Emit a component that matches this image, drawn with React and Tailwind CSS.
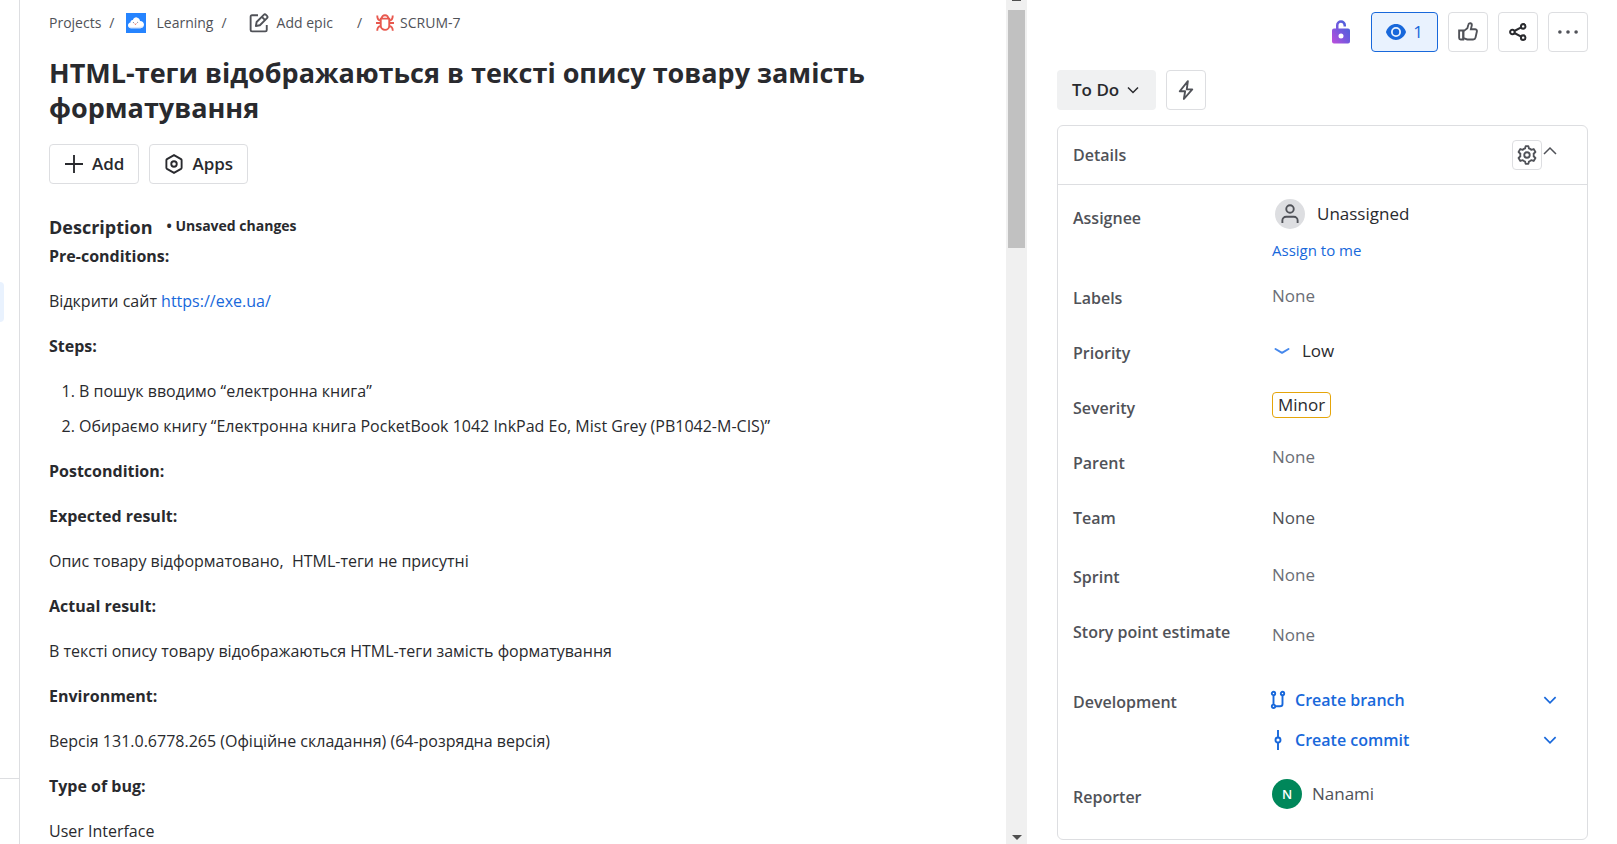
import React from "react";

const FONT = "font-['Open_Sans','Noto_Sans',sans-serif]";

function Svg({ size = 18, box = 16, className = "", children, ...rest }) {
  return (
    <svg
      width={size}
      height={size}
      viewBox={`0 0 ${box} ${box}`}
      fill="none"
      stroke="currentColor"
      strokeWidth="1.5"
      aria-hidden="true"
      className={`shrink-0 ${className}`}
      {...rest}
    >
      {children}
    </svg>
  );
}

const ChevronDown = ({ size = 18 }) => (
  <Svg size={size}>
    <path d="M3 5.500 8 10.500l5-5" />
  </Svg>
);
const ChevronUp = ({ size = 18 }) => (
  <Svg size={size}>
    <path d="M2 11 8 5l6 6" />
  </Svg>
);

const CloudLogo = () => (
  <svg width="20" height="20" viewBox="0 0 20 20" aria-hidden="true" className="shrink-0">
    <rect width="20" height="20" fill="#2684ff" />
    <path
      d="M5.200 15.200c-2 0-3.200-1.300-3.200-2.900 0-1.500 1.100-2.600 2.500-2.800C4.400 7.800 5.500 6.700 6.900 6.900 7.500 5.200 9 4.200 10.700 4.400c2 .2 3.200 1.700 3.300 3.500 2.300 0 4 1.500 4 3.700 0 2.100-1.600 3.600-3.700 3.600z"
      fill="#fff"
    />
    <path d="M2.300 13.400c.6 1.200 1.700 1.800 2.900 1.800h9.100c1.500 0 2.700-.7 3.300-1.900-3 .9-12 1-15.300.1z" fill="#dbe8fb" />
    <circle cx="7.400" cy="9.500" r=".5" fill="#5e6c84" />
    <circle cx="11.600" cy="9.200" r=".5" fill="#5e6c84" />
    <path d="M8.500 10.700c.5.900 1.500.8 1.900-.1" stroke="#e5493a" strokeWidth=".9" fill="none" />
  </svg>
);

const EditIcon = () => (
  <Svg size={20}>
    <path d="M7.200 1.800H2.400c-.7 0-1.100.5-1.100 1.100v10.700c0 .6.500 1.100 1.100 1.100h10.700c.7 0 1.100-.5 1.100-1.100V9.500" />
    <path d="M5.500 10.400l.6-3.200 5.700-5.700c.5-.5 1.300-.5 1.800 0l.8.800c.5.500.5 1.300 0 1.800L8.700 9.800z" strokeLinejoin="round" />
    <path d="M10.300 3.100l2.600 2.600" />
  </Svg>
);

const BugIcon = () => (
  <Svg size={20}>
    <path d="M4.600 4.500h6.800v5.600a3.400 3.400 0 0 1-6.800 0z" />
    <path d="M5.300 4.500a2.700 2.700 0 0 1 5.400 0" />
    <path d="M4.600 8H.8M15.200 8h-3.800M4.600 6C2.600 6 1.800 4.600 1.800 2M11.400 6c2 0 2.800-1.400 2.800-4M4.800 10.500c-2 0-3 1.200-3 3.700M11.200 10.500c2 0 3 1.200 3 3.700" />
  </Svg>
);

const AppsIcon = () => (
  <Svg size={20}>
    <path d="M8 .9l5.600 3.200c.3.200.5.500.5.900v6c0 .4-.2.700-.5.900L8 15.100l-5.600-3.200c-.3-.2-.5-.5-.5-.9V5c0-.4.2-.7.5-.9z" />
    <circle cx="8" cy="8" r="2.200" />
  </Svg>
);

const LockIcon = () => (
  <svg width="18" height="24" viewBox="0 0 18 24" aria-hidden="true" className="shrink-0">
    <defs>
      <linearGradient id="lock" x1="0" y1="1" x2="1" y2="0">
        <stop offset="0" stopColor="#bf4fdc" />
        <stop offset=".5" stopColor="#7358de" />
        <stop offset="1" stopColor="#3b63d8" />
      </linearGradient>
    </defs>
    <path
      fill="url(#lock)"
      fillRule="evenodd"
      d="M2 8.500h2V5.200a5 5 0 0 1 10 0V6.500h-2.500V5.200a2.500 2.500 0 0 0-5 0V8.500H16a2 2 0 0 1 2 2V21.500a2 2 0 0 1-2 2H2a2 2 0 0 1-2-2V10.500a2 2 0 0 1 2-2zm7 5a2.500 2.500 0 1 0 0 5 2.500 2.500 0 0 0 0-5z"
    />
  </svg>
);

const EyeIcon = () => (
  <svg width="20" height="16" viewBox="0 0 20 16" aria-hidden="true" className="shrink-0">
    <path
      fill="currentColor"
      fillRule="evenodd"
      d="M10 0c4.300 0 7.700 2.600 9.700 6.900.3.700.3 1.500 0 2.200C17.700 13.400 14.300 16 10 16S2.300 13.400.3 9.100a2.700 2.700 0 0 1 0-2.200C2.300 2.600 5.700 0 10 0zm0 3a5 5 0 1 0 0 10 5 5 0 0 0 0-10zm0 1.800a3.200 3.200 0 1 1 0 6.400 3.200 3.200 0 0 1 0-6.400z"
    />
  </svg>
);

const ThumbIcon = () => (
  <Svg size={20}>
    <path d="M.9 6.800h3.300v7.200H2.100c-.7 0-1.200-.5-1.200-1.200z" />
    <path d="M4.300 7.500 7.500 5l.8-2.900c.2-.8.900-1.300 1.700-1.100.8.200 1.200 1 1 1.800L10.300 5.800h3.300c1 0 1.700.9 1.500 1.800l-1.100 4.900c-.2.900-1 1.500-1.900 1.500H7.400L4.300 12.900z" />
  </Svg>
);

const ShareIcon = () => (
  <Svg size={18} strokeWidth="1.800">
    <circle cx="3" cy="8" r="2" />
    <circle cx="12.600" cy="3" r="2" />
    <circle cx="12.600" cy="13" r="2" />
    <path d="M4.800 7.100l6-3.200M4.800 8.900l6 3.200" />
  </Svg>
);

const MoreIcon = () => (
  <svg width="20" height="20" viewBox="0 0 20 20" fill="currentColor" aria-hidden="true">
    <circle cx="1.900" cy="10" r="1.800" />
    <circle cx="10" cy="10" r="1.800" />
    <circle cx="18.100" cy="10" r="1.800" />
  </svg>
);

const BoltIcon = () => (
  <Svg size={20}>
    <path d="M9.500.9 3 9h4.300l-1 6.200L13 7.500H8.600z" strokeLinejoin="round" />
  </Svg>
);

const GearIcon = () => (
  <Svg size={22} box={24} strokeWidth="2">
    <path d="M9.900 4.900l.6-2.600h3l.6 2.600a7.400 7.400 0 0 1 2.500 1.400l2.700-.8 1.900 3.200-2 1.900a7.400 7.400 0 0 1 0 2.800l2 1.900-1.900 3.200-2.700-.8a7.400 7.400 0 0 1-2.500 1.400l-.6 2.600h-3l-.6-2.600a7.400 7.400 0 0 1-2.500-1.400l-2.700.8-1.900-3.200 2-1.900a7.400 7.400 0 0 1 0-2.800l-2-1.900 1.900-3.200 2.700.8a7.400 7.400 0 0 1 2.500-1.400z" strokeLinejoin="round" />
    <circle cx="12" cy="12" r="3" />
  </Svg>
);

const PersonIcon = () => (
  <Svg size={20}>
    <circle cx="8" cy="4" r="3" />
    <path d="M1.900 15.200v-2c0-1.700 1.300-3 3-3h6.200c1.700 0 3 1.300 3 3v2" />
  </Svg>
);

const LowIcon = () => (
  <Svg size={16} className="text-[#4688ec]" strokeWidth="2">
    <path d="M1.500 6 8 9.800 14.500 6" strokeLinecap="round" strokeLinejoin="round" />
  </Svg>
);

const BranchIcon = () => (
  <svg width="16" height="20" viewBox="0 0 16 20" fill="none" stroke="currentColor" strokeWidth="1.900" aria-hidden="true" className="shrink-0">
    <circle cx="3.500" cy="3.500" r="1.700" />
    <circle cx="12.500" cy="3.500" r="1.700" />
    <circle cx="3.500" cy="16.300" r="1.700" />
    <path d="M3.500 5.500v8.800M12.500 5.500V14c0 1.500-1 2.300-2.500 2.300H5.500" />
  </svg>
);

const CommitIcon = () => (
  <svg width="16" height="20" viewBox="0 0 16 20" fill="none" stroke="currentColor" strokeWidth="1.900" aria-hidden="true" className="shrink-0">
    <circle cx="8" cy="10" r="2.500" />
    <path d="M8 0v7.400M8 12.600V20" />
  </svg>
);

const squareButton =
  "flex size-10 items-center justify-center rounded border border-[#dddee1] bg-white";

function Rail() {
  return (
    <aside className="flex w-5 shrink-0 flex-col border-r border-[#dddee1]">
      <div className="flex-1 pt-[282px]">
        <div className="h-10 w-1 rounded-r bg-[#e9f2fe]" />
      </div>
      <div className="h-[66px] border-t border-[#dddee1]" />
    </aside>
  );
}

function Breadcrumbs() {
  return (
    <nav aria-label="Breadcrumbs" className="flex h-6 items-center text-sm leading-6 text-[#505258]">
      <a href="#projects">Projects</a>
      <span className="px-2">/</span>
      <a href="#learning" className="ml-1 flex items-center gap-[10px]">
        <CloudLogo />
        Learning
      </a>
      <span className="px-2">/</span>
      <button type="button" className="ml-[14px] flex items-center gap-2">
        <EditIcon />
        Add epic
      </button>
      <span className="ml-4 px-2">/</span>
      <a href="#scrum-7" className="ml-[5px] flex items-center gap-[5px]">
        <span className="text-[#e8584e]">
          <BugIcon />
        </span>
        SCRUM-7
      </a>
    </nav>
  );
}

function Description() {
  return (
    <section className="mt-[27px]">
      <div className="flex items-start gap-[14px]">
        <h2 className="text-[18px] font-bold leading-8">Description</h2>
        <span className="text-sm font-bold leading-[30px]">• Unsaved changes</span>
      </div>
      <div className="flex flex-col gap-[18px] text-base leading-[27px]">
        <p className="font-bold">Pre-conditions:</p>
        <p>
          Відкрити сайт{" "}
          <a href="https://exe.ua/" className="text-[#1868db]">
            https://exe.ua/
          </a>
        </p>
        <p className="font-bold">Steps:</p>
        <ol className="flex list-decimal flex-col gap-2 pl-[30px]">
          <li>В пошук вводимо “електронна книга”</li>
          <li>Обираємо книгу “Електронна книга PocketBook 1042 InkPad Eo, Mist Grey (PB1042-M-CIS)”</li>
        </ol>
        <p className="font-bold">Postcondition:</p>
        <p className="font-bold">Expected result:</p>
        <p>Опис товару відформатовано,&nbsp; HTML-теги не присутні</p>
        <p className="font-bold">Actual result:</p>
        <p>В тексті опису товару відображаються HTML-теги замість форматування</p>
        <p className="font-bold">Environment:</p>
        <p>Версія 131.0.6778.265 (Офіційне складання) (64-розрядна версія)</p>
        <p className="font-bold">Type of bug:</p>
        <p>User Interface</p>
      </div>
    </section>
  );
}

function Scrollbar() {
  return (
    <div className="flex w-[21px] shrink-0 flex-col items-center justify-between bg-[#f0f0f0]">
      <div className="flex w-full flex-col items-center">
        <div className="h-px w-[9px] bg-[#505050]" />
        <div className="mt-[9px] h-[238px] w-[17px] bg-[#c1c1c1]" />
      </div>
      <svg width="10" height="5" viewBox="0 0 10 5" fill="#505050" aria-hidden="true" className="mb-1">
        <path d="M0 0h10L5 5z" />
      </svg>
    </div>
  );
}

function Row({ label, height, valuePad = "pt-1.5", children }) {
  return (
    <div className={`flex items-start ${height}`}>
      <dt className="w-[199px] shrink-0 pt-2 text-base leading-6 font-semibold text-[#505258]">{label}</dt>
      <dd className={`min-w-0 flex-1 ${valuePad}`}>{children}</dd>
    </div>
  );
}

const None = () => <span className="text-[#6b6e76]">None</span>;

function DevAction({ icon, children }) {
  return (
    <div className="flex h-9 items-center justify-between pr-[13px] text-[#1868db]">
      <button type="button" className="flex items-center gap-[9px] text-base font-semibold">
        {icon}
        {children}
      </button>
      <button type="button" aria-label={`${children} options`}>
        <ChevronDown />
      </button>
    </div>
  );
}

function Details() {
  return (
    <section className="mt-[15px] rounded-md border border-[#dddee1] pb-[22px]">
      <header className="flex h-[59px] items-center justify-between border-b border-[#dddee1] pl-[15px] pr-[29px]">
        <h2 className="text-base font-semibold text-[#505258]">Details</h2>
        <div className="flex items-center">
          <button
            type="button"
            aria-label="Configure"
            className="flex size-[30px] items-center justify-center rounded border border-[#dddee1] text-[#505258]"
          >
            <GearIcon />
          </button>
          <button type="button" aria-label="Collapse" className="pb-2 text-[#505258]">
            <ChevronUp size={16} />
          </button>
        </div>
      </header>
      <dl className="pl-[15px] pr-[15px] pt-[13px]">
        <Row label="Assignee" height="min-h-20" valuePad="pt-px">
          <div className="flex items-center gap-3 pl-[3px]">
            <span className="flex size-[30px] items-center justify-center rounded-full bg-[#dddee1] text-[#505258]">
              <PersonIcon />
            </span>
            Unassigned
          </div>
          <button type="button" className="mt-[7px] block text-[15px] leading-7 text-[#1868db]">
            Assign to me
          </button>
        </Row>
        <Row label="Labels" height="min-h-[55px]">
          <None />
        </Row>
        <Row label="Priority" height="min-h-[55px]">
          <div className="flex items-center gap-3 pl-0.5">
            <LowIcon />
            Low
          </div>
        </Row>
        <Row label="Severity" height="min-h-[55px]" valuePad="pt-1">
          <span className="inline-block rounded border border-[#e5a50a] px-[5px]">Minor</span>
        </Row>
        <Row label="Parent" height="min-h-[55px]" valuePad="pt-0.5">
          <None />
        </Row>
        <Row label="Team" height="min-h-[59px]" valuePad="pt-2">
          <span className="text-[#505258]">None</span>
        </Row>
        <Row label="Sprint" height="min-h-[55px]">
          <None />
        </Row>
        <Row label="Story point estimate" height="min-h-[70px]" valuePad="pt-[11px]">
          <None />
        </Row>
        <Row label="Development" height="min-h-[95px]" valuePad="pt-0">
          <div className="-ml-0.5 flex flex-col gap-1">
            <DevAction icon={<BranchIcon />}>Create branch</DevAction>
            <DevAction icon={<CommitIcon />}>Create commit</DevAction>
          </div>
        </Row>
        <Row label="Reporter" height="min-h-10" valuePad="pt-0.5">
          <div className="flex items-center gap-[10px] text-[#505258]">
            <span className="flex size-[30px] items-center justify-center rounded-full bg-[#00875a] text-[13px] font-semibold text-white">
              N
            </span>
            Nanami
          </div>
        </Row>
      </dl>
    </section>
  );
}

export default function App() {
  return (
    <div className={`flex h-screen overflow-hidden bg-white text-[#292a2e] ${FONT}`}>
      <Rail />
      <main className="min-w-0 flex-1 overflow-hidden pl-[29px] pr-20 pt-[11px]">
        <Breadcrumbs />
        <h1 className="mt-5 text-[27px] font-bold leading-[35px]">
          HTML-теги відображаються в тексті опису товару замість форматування
        </h1>
        <div className="mt-[19px] flex gap-[10px] text-[17px] font-semibold">
          <button type="button" className="flex h-10 items-center gap-2 rounded border border-[#dddee1] px-[14px]">
            <Svg size={20}>
              <path d="M8 .8v14.400M.8 8h14.400" />
            </Svg>
            Add
          </button>
          <button type="button" className="flex h-10 items-center gap-2 rounded border border-[#dddee1] px-[14px]">
            <AppsIcon />
            Apps
          </button>
        </div>
        <Description />
      </main>
      <Scrollbar />
      <aside className="w-[590px] shrink-0 pl-[30px] pr-[29px] pt-3 text-[17px] leading-6">
        <div className="flex items-center justify-end gap-[10px]">
          <button type="button" aria-label="Restrictions" className="mr-[11px]">
            <LockIcon />
          </button>
          <button
            type="button"
            aria-label="Watchers"
            className="flex h-10 items-center gap-[7px] rounded border border-[#1868db] bg-[#e9f2fe] px-[14px] text-[#1868db]"
          >
            <EyeIcon />1
          </button>
          <button type="button" aria-label="Like" className={`${squareButton} text-[#505258]`}>
            <ThumbIcon />
          </button>
          <button type="button" aria-label="Share" className={squareButton}>
            <ShareIcon />
          </button>
          <button type="button" aria-label="More" className={`${squareButton} text-[#505258]`}>
            <MoreIcon />
          </button>
        </div>
        <div className="mt-[18px] flex gap-[10px]">
          <button type="button" className="flex h-10 items-center gap-1.5 rounded bg-[#f0f1f2] px-[15px] font-semibold">
            To Do
            <ChevronDown size={16} />
          </button>
          <button type="button" aria-label="Automation" className={`${squareButton} text-[#505258]`}>
            <BoltIcon />
          </button>
        </div>
        <Details />
      </aside>
    </div>
  );
}
